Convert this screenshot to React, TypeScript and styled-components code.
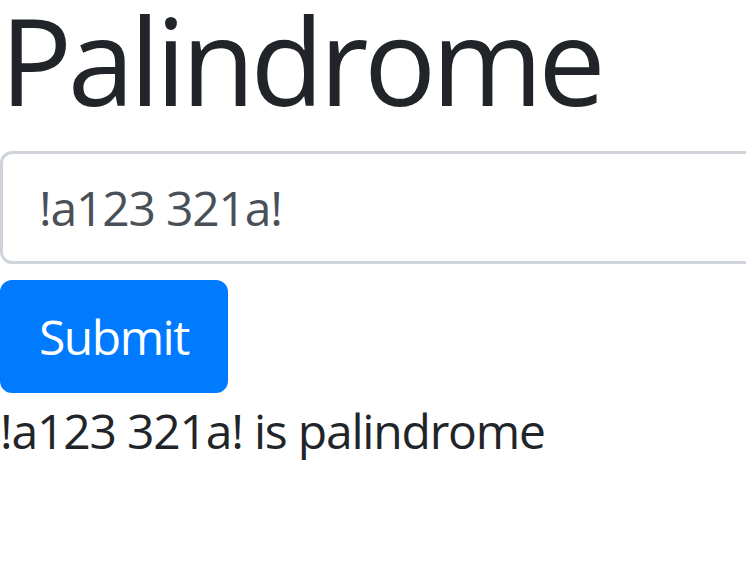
import { useState } from 'react';
import styled, { createGlobalStyle } from 'styled-components';

const isPalindrome = (value: string) => {
    const chars = value.split('');
    return chars.join('') === chars.reverse().join('');
};

export default function App() {
    const [text, setText] = useState('!a123 321a!');
    const [result, setResult] = useState('!a123 321a! is palindrome');

    const submit = (e: React.FormEvent) => {
        e.preventDefault();
        setResult(`${text} ${isPalindrome(text) ? 'is' : 'is not'} palindrome`);
    };

    return (
        <>
            <GlobalStyle />
            <Page>
                <Title>Palindrome</Title>
                <Form onSubmit={submit}>
                    <TextInput
                        type='text'
                        value={text}
                        onChange={(e) => setText(e.target.value)}
                    />
                    <SubmitButton type='submit'>Submit</SubmitButton>
                </Form>
                <Result>{result}</Result>
            </Page>
        </>
    );
}

const GlobalStyle = createGlobalStyle`
    html, body {
        margin: 0;
        padding: 0;
        background: #fff;
        overflow: hidden;
    }
    body {
        font-family: 'Open Sans', 'Noto Sans', sans-serif;
        color: #212529;
    }
`;

const Page = styled.div`
    width: 100%;
`;

const Title = styled.h1`
    margin: 0 0 31px;
    font-size: 120px;
    font-weight: 400;
    line-height: 1;
    letter-spacing: -4.5px;
    color: #212529;
`;

const Form = styled.form`
    display: flex;
    flex-direction: column;
    align-items: flex-start;
    gap: 16px;
    margin: 0;
`;

const TextInput = styled.input`
    box-sizing: border-box;
    width: calc(100% + 60px);
    height: 113px;
    padding: 0 36px;
    border: 3px solid #ced4da;
    border-radius: 12px;
    font-family: inherit;
    font-size: 48px;
    letter-spacing: -1.2px;
    color: #495057;
    background: #fff;
    outline: none;
`;

const SubmitButton = styled.button`
    box-sizing: border-box;
    height: 113px;
    padding: 0 36px;
    border: 3px solid #007bff;
    border-radius: 12px;
    background: #007bff;
    color: #fff;
    font-family: inherit;
    font-size: 48px;
    letter-spacing: -1.5px;
    cursor: pointer;
`;

const Result = styled.p`
    margin: 2px 0 0;
    font-size: 48px;
    line-height: 1.5;
    letter-spacing: -1.2px;
    color: #212529;
`;
